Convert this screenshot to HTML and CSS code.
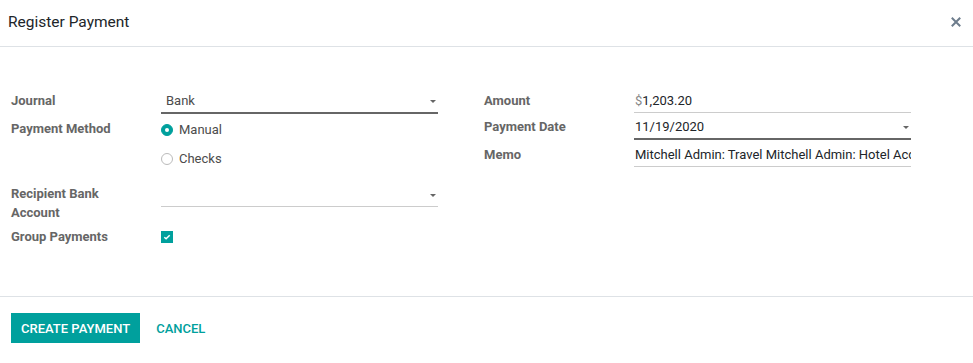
FILE: index.html
```html
<!doctype html>
<html>
<head>
<meta charset="utf-8">
<title>Register Payment</title>
	<link rel="stylesheet" href="styles.css">
</head>

<body>
	<div class="modal">
		<div class="modal-header">
			<h4 class="modal-title">Register Payment</h4>
			<span class="close">
				<svg width="10" height="10" viewBox="0 0 10 10"><path d="M1.5 1.5 L8.5 8.5 M8.5 1.5 L1.5 8.5" stroke="#6d7c8c" stroke-width="2" stroke-linecap="square"/></svg>
			</span>
		</div>

		<div class="modal-body">
			<div class="group">
				<div class="row row-journal">
					<label class="lbl">Journal</label>
					<div class="field select focus">
						<span>Bank</span>
						<i class="caret"></i>
					</div>
				</div>
				<div class="row row-method">
					<label class="lbl lbl-method">Payment Method</label>
					<div class="radios">
						<div class="radio"><span class="dot on"></span>Manual</div>
						<div class="radio"><span class="dot"></span>Checks</div>
					</div>
				</div>
				<div class="row row-bank">
					<label class="lbl lbl-wrap">Recipient Bank Account</label>
					<div class="field select empty">
						<span></span>
						<i class="caret"></i>
					</div>
				</div>
				<div class="row">
					<label class="lbl">Group Payments</label>
					<div class="check-cell">
						<span class="check">
							<svg width="8" height="8" viewBox="0 0 8 8"><path d="M1.3 4.2 L3.1 5.8 L6.7 2.2" stroke="#fff" stroke-width="1.5" fill="none"/></svg>
						</span>
					</div>
				</div>
			</div>

			<div class="group">
				<div class="row row-right">
					<label class="lbl">Amount</label>
					<div class="field"><span><span class="cur">$</span>1,203.20</span></div>
				</div>
				<div class="row row-right">
					<label class="lbl">Payment Date</label>
					<div class="field select focus dark">
						<span>11/19/2020</span>
						<i class="caret"></i>
					</div>
				</div>
				<div class="row row-right">
					<label class="lbl">Memo</label>
					<div class="field dark memo"><span>Mitchell Admin: Travel Mitchell Admin: Hotel Accommodation</span></div>
				</div>
			</div>
		</div>

		<div class="modal-footer">
			<button type="button" class="btn btn-primary">CREATE PAYMENT</button>
			<button type="button" class="btn btn-link">CANCEL</button>
		</div>
	</div>
</body>
</html>
```

FILE: styles.css
```css
*{padding: 0;margin: 0;box-sizing: border-box;}
body{
	font-family: Roboto, "Liberation Sans", sans-serif;
	font-size: 13px;
	color: #4c4c4c;
	background: #fff;}

.modal{width: 973px;}

.modal-header{
	height: 47px;
	border-bottom: 1px solid #dee2e6;
	display: flex;
	align-items: center;
	justify-content: space-between;
	padding: 0 12px 2px 8px;}
.modal-title{
	font-size: 15.5px;
	font-weight: 400;
	color: #212529;}
.close{display: flex;margin-bottom: 1px;}

.modal-body{
	display: flex;
	gap: 46px;
	padding: 43px 11px 48px 11px;
	height: 249px;}
.group{width: 427px;}

.row{
	display: grid;
	grid-template-columns: 150px 1fr;}
.lbl{
	font-weight: 700;
	color: #666;
	line-height: 22px;}
.lbl-method{line-height: 28px;}
.lbl-wrap{line-height: 19px;width: 110px;}

.field{
	height: 23px;
	line-height: 22px;
	border-bottom: 1px solid #ccc;
	display: flex;
	align-items: center;
	justify-content: space-between;
	padding-left: 5px;
	font-size: 13px;
	overflow: hidden;}
.field.focus{border-bottom: 2px solid #666;height: 24px;}
.field.dark{color: #212529;padding-left: 1px;}
.cur{color: #888;}
.row-right{margin-bottom: 3px;}
.row-right:nth-child(2){margin-bottom: 4px;}
.row-right .field{height: 23px;padding-left: 1px;color: #212529;}
.row-right .field.focus{height: 24px;}
.memo span{white-space: nowrap;}

.caret{
	width: 0;
	height: 0;
	border-left: 3.5px solid transparent;
	border-right: 3.5px solid transparent;
	border-top: 3.5px solid #666;
	margin-right: 2px;
	flex: none;}

.row-method{margin-top: 1px;}
.radios{display: flex;flex-direction: column;}
.radio{
	height: 29px;
	display: flex;
	align-items: center;
	font-size: 13px;}
.dot{
	width: 12px;
	height: 12px;
	border-radius: 50%;
	border: 1px solid #bbb;
	margin-right: 6px;
	position: relative;}
.dot.on{background: #00a09d;border-color: #00a09d;}
.dot.on::after{
	content: "";
	position: absolute;
	left: 3px;
	top: 3px;
	width: 4px;
	height: 4px;
	border-radius: 50%;
	background: #fff;}

.row-bank{margin-top: 11px;margin-bottom: 4px;}
.row-bank .field{height: 23px;}

.check-cell{display: flex;align-items: center;}
.check{
	width: 12px;
	height: 12px;
	background: #00a09d;
	display: flex;
	align-items: center;
	justify-content: center;}

.modal-footer{
	border-top: 1px solid #dee2e6;
	padding: 16px 11px;
	display: flex;
	gap: 6px;}
.btn{
	font-family: Roboto, "Liberation Sans", sans-serif;
	font-size: 13px;
	font-weight: 500;
	border: none;
	height: 30px;
	padding: 0 10px;
	background: none;
	cursor: pointer;}
.btn-primary{background: #00a09d;color: #fff;}
.btn-link{color: #00a09d;}
```
